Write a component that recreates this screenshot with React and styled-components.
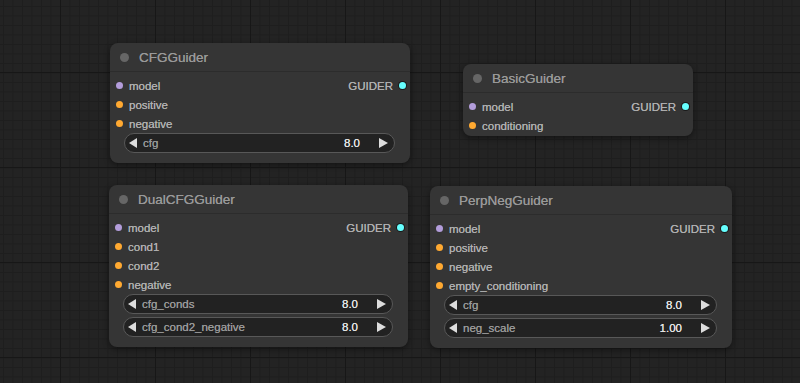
import React from 'react';
import styled, { createGlobalStyle } from 'styled-components';

/* ComfyUI style guider nodes on a grid canvas */

const GlobalStyle = createGlobalStyle`
  html, body {
    margin: 0;
    padding: 0;
    background: #222;
  }
  body {
    font-family: 'Liberation Sans', Arial, sans-serif;
  }
`;

const SLOT_COLORS = {
  MODEL: '#b39ddb',
  CONDITIONING: '#ffa931',
  GUIDER: '#66ffff',
};

const Canvas = styled.div`
  position: relative;
  width: 800px;
  height: 383px;
  overflow: hidden;
  background-color: #232323;
  background-image:
    linear-gradient(to right, #171717 1px, transparent 1px),
    linear-gradient(to bottom, #171717 1px, transparent 1px),
    linear-gradient(to right, #1e1e1e 1px, transparent 1px),
    linear-gradient(to bottom, #1e1e1e 1px, transparent 1px);
  background-size: 95px 95px, 95px 95px, 9.5px 9.5px, 9.5px 9.5px;
  background-position: 60px 0, 0 72px, 3px 0, 0 6px;
`;

const Node = styled.div`
  position: absolute;
  left: ${(p) => p.$x}px;
  top: ${(p) => p.$y}px;
  width: ${(p) => p.$w}px;
  background: #353535;
  border-radius: 8px;
  box-shadow: 0 2px 6px rgba(0, 0, 0, 0.45);
  padding-bottom: 1px;
`;

const Title = styled.div`
  height: 28px;
  display: flex;
  align-items: center;
  gap: 10px;
  padding-left: 10px;
  border-bottom: 1px solid #2c2c2c;
  color: #999;
  font-size: 13.5px;
  text-shadow: 0 0 0.4px #999;
`;

const TitleDot = styled.span`
  width: 9px;
  height: 9px;
  border-radius: 50%;
  background: #666;
`;

const Body = styled.div`
  padding-top: 4px;
`;

const Row = styled.div`
  height: 19px;
  display: flex;
  align-items: center;
  justify-content: space-between;
`;

const Slot = styled.div`
  display: flex;
  align-items: center;
  gap: 6px;
  color: #b0b0b0;
  font-size: 11.5px;
  text-shadow: 0 0 0.5px #b0b0b0;
  padding-left: ${(p) => (p.$out ? 0 : 6)}px;
  padding-right: ${(p) => (p.$out ? 4 : 0)}px;
`;

const SlotDot = styled.span`
  width: 7px;
  height: 7px;
  border-radius: 50%;
  background: ${(p) => p.$color};
  box-shadow: ${(p) => (p.$out ? '0 0 0 1px #1a1a1a' : 'none')};
`;

const Widgets = styled.div`
  display: flex;
  flex-direction: column;
  gap: 3px;
  padding: 0 15px 9px 14px;
`;

const Widget = styled.div`
  height: 18px;
  display: flex;
  align-items: center;
  border: 1px solid #585858;
  border-radius: 10px;
  background: #222;
  padding: 0 6px 0 4px;
  font-size: 11.5px;
`;

const Arrow = styled.span`
  width: 0;
  height: 0;
  border-top: 5px solid transparent;
  border-bottom: 5px solid transparent;
  ${(p) =>
    p.$right
      ? 'border-left: 9px solid #ddd;'
      : 'border-right: 8px solid #ddd;'}
`;

const WidgetLabel = styled.span`
  flex: 1;
  color: #999;
  margin-left: 6px;
  text-shadow: 0 0 0.4px #999;
`;

const WidgetValue = styled.span`
  color: #e6e6e6;
  margin-right: 19px;
  text-shadow: 0 0 0.5px #e6e6e6;
`;

const nodes = [
  {
    title: 'CFGGuider',
    x: 110,
    y: 43,
    w: 300,
    inputs: [
      ['model', 'MODEL'],
      ['positive', 'CONDITIONING'],
      ['negative', 'CONDITIONING'],
    ],
    widgets: [['cfg', '8.0']],
  },
  {
    title: 'BasicGuider',
    x: 463,
    y: 64,
    w: 230,
    inputs: [
      ['model', 'MODEL'],
      ['conditioning', 'CONDITIONING'],
    ],
    widgets: [],
  },
  {
    title: 'DualCFGGuider',
    x: 109,
    y: 185,
    w: 299,
    inputs: [
      ['model', 'MODEL'],
      ['cond1', 'CONDITIONING'],
      ['cond2', 'CONDITIONING'],
      ['negative', 'CONDITIONING'],
    ],
    widgets: [
      ['cfg_conds', '8.0'],
      ['cfg_cond2_negative', '8.0'],
    ],
  },
  {
    title: 'PerpNegGuider',
    x: 430,
    y: 186,
    w: 302,
    inputs: [
      ['model', 'MODEL'],
      ['positive', 'CONDITIONING'],
      ['negative', 'CONDITIONING'],
      ['empty_conditioning', 'CONDITIONING'],
    ],
    widgets: [
      ['cfg', '8.0'],
      ['neg_scale', '1.00'],
    ],
  },
];

function GraphNode({ node }) {
  return (
    <Node $x={node.x} $y={node.y} $w={node.w}>
      <Title>
        <TitleDot />
        {node.title}
      </Title>
      <Body>
        {node.inputs.map(([name, type], i) => (
          <Row key={name}>
            <Slot>
              <SlotDot $color={SLOT_COLORS[type]} />
              {name}
            </Slot>
            {i === 0 ? (
              <Slot $out>
                GUIDER
                <SlotDot $out $color={SLOT_COLORS.GUIDER} />
              </Slot>
            ) : null}
          </Row>
        ))}
      </Body>
      {node.widgets.length > 0 ? (
        <Widgets>
          {node.widgets.map(([label, value]) => (
            <Widget key={label}>
              <Arrow />
              <WidgetLabel>{label}</WidgetLabel>
              <WidgetValue>{value}</WidgetValue>
              <Arrow $right />
            </Widget>
          ))}
        </Widgets>
      ) : null}
    </Node>
  );
}

export default function App() {
  return (
    <>
      <GlobalStyle />
      <Canvas>
        {nodes.map((n) => (
          <GraphNode key={n.title} node={n} />
        ))}
      </Canvas>
    </>
  );
}
